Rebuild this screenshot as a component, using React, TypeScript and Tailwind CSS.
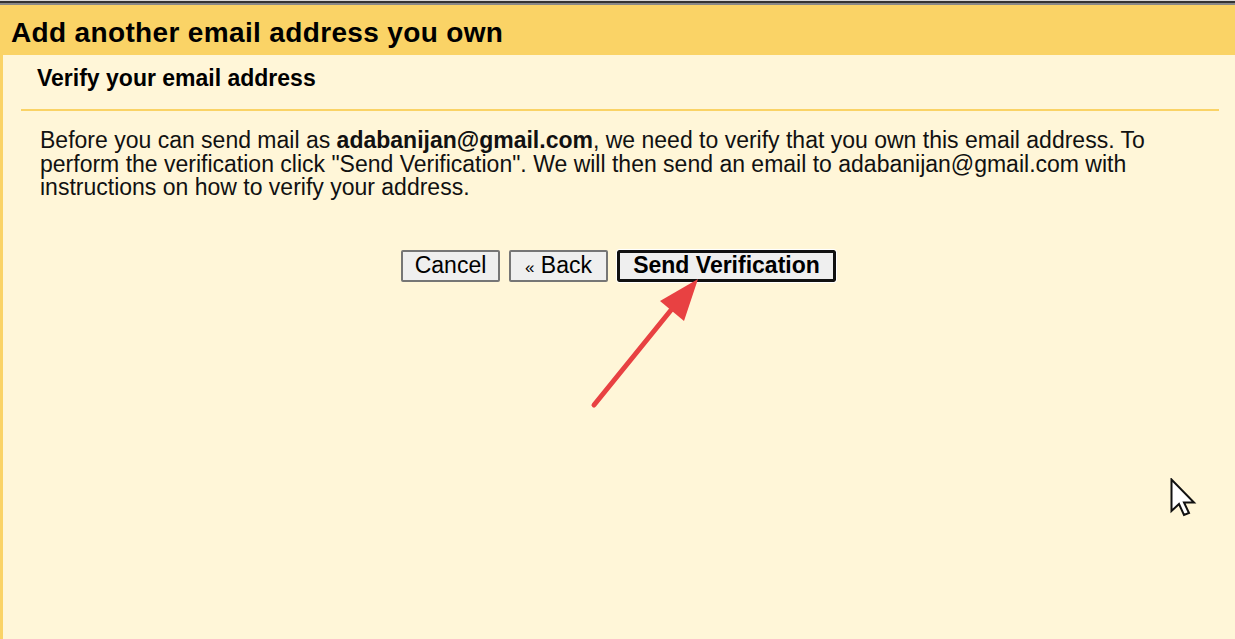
import type { ReactNode } from 'react'

const font = { fontFamily: '"Liberation Sans", Arial, sans-serif' }

function Btn({ children, primary }: { children: ReactNode; primary?: boolean }) {
  return (
    <button
      type="button"
      className={
        primary
          ? 'h-[32px] w-[219px] rounded-[2px] border-[3px] border-[#111] bg-[#efefef] text-[23px] leading-none font-bold text-black outline outline-1 outline-white'
          : 'h-[32px] w-[99px] rounded-[2px] border-2 border-[#767676] bg-[#efefef] text-[23px] leading-none text-black'
      }
    >
      {children}
    </button>
  )
}

export default function App() {
  return (
    <div style={font} className="relative h-[639px] w-[1235px] overflow-hidden bg-[#fff6d8]">
      <div className="h-px bg-[#d8d8d8]" />
      <div className="h-[2px] bg-[#333]" />
      <div className="h-[2px] bg-[#888]" />
      <div className="flex h-[50px] items-center bg-[#fad366] pl-[11px] pt-[5px]">
        <h1 className="text-[28px] font-bold leading-none tracking-[0.35px] text-black">
          Add another email address you own
        </h1>
      </div>
      <div className="h-[584px] border-l-[3px] border-[#fad366] pl-[18px] pr-[16px]">
        <div className="border-b-2 border-[#fad366] pb-[18px] pl-[16px] pt-[10px]">
          <h2 className="text-[23px] font-bold leading-[26px] text-black">
            Verify your email address
          </h2>
        </div>
        <p className="mr-[29px] mt-[18px] pl-[19px] text-[23px] leading-[23.5px] text-[#111]">
          Before you can send mail as <b>adabanijan@gmail.com</b>, we need to verify that you own this
          email address. To perform the verification click "Send Verification". We will then send an
          email to adabanijan@gmail.com with instructions on how to verify your address.
        </p>
        <div className="mt-[50px] flex justify-center gap-[9px] pr-[3px]">
          <Btn>Cancel</Btn>
          <Btn>
            <span className="text-[17px]">«</span> Back
          </Btn>
          <Btn primary>Send Verification</Btn>
        </div>
      </div>

      {/* annotation arrow */}
      <svg className="pointer-events-none absolute left-0 top-0" width="1235" height="639">
        <line x1="594" y1="405" x2="680" y2="299" stroke="#e84142" strokeWidth="5" strokeLinecap="round" />
        <polygon points="698,279 660,301 684,321" fill="#e84142" />
      </svg>

      {/* mouse cursor */}
      <svg className="absolute left-[1170px] top-[478px]" width="28" height="40" viewBox="0 0 28 40">
        <path
          d="M1.5 1.5 L1.5 33 L9 26 L14 37 L19 35 L14 24.5 L24 24.5 Z"
          fill="#fff"
          stroke="#111"
          strokeWidth="2"
          strokeLinejoin="miter"
        />
      </svg>
    </div>
  )
}
